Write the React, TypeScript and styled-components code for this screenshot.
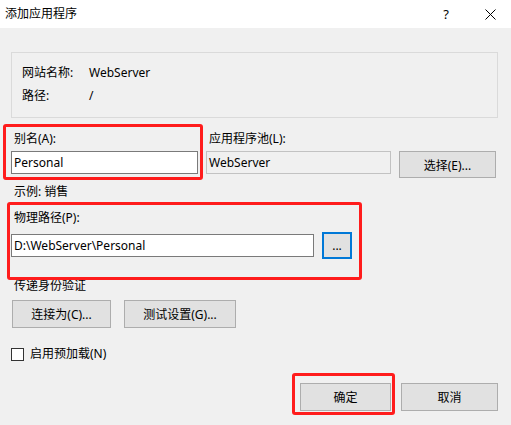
import React from "react";
import styled, { createGlobalStyle } from "styled-components";

const GlobalStyle = createGlobalStyle`
  html, body {
    margin: 0;
    padding: 0;
    background: #f0f0f0;
  }
  body {
    font-family: "Noto Sans", "Noto Sans CJK SC", sans-serif;
    font-size: 12px;
    color: #000;
  }
`;

const Dialog = styled.div`
  width: 511px;
  height: 425px;
  background: #f0f0f0;
  overflow: hidden;
`;

const TitleBar = styled.div`
  height: 28px;
  background: #fff;
  display: flex;
  align-items: center;
  padding-left: 5px;
`;

const Title = styled.span`
  flex: 1;
  font-size: 12px;
  line-height: 16px;
`;

const TitleButton = styled.span<{ $w: number }>`
  width: ${(p) => p.$w}px;
  height: 28px;
  display: flex;
  align-items: center;
  justify-content: center;
  font-size: 13px;
`;

const Body = styled.div`
  padding: 0 13px 0 11px;
`;

const InfoBox = styled.div`
  margin-top: 24px;
  height: 66px;
  box-sizing: border-box;
  border: 1px solid #dadada;
  padding: 12px 10px 0;
  display: flex;
  flex-direction: column;
  gap: 7px;
`;

const InfoRow = styled.div`
  display: flex;
  align-items: center;
  height: 16px;
  line-height: 16px;
`;

const InfoLabel = styled.span`
  width: 67px;
`;

const Label = styled.div<{ $mt?: number }>`
  height: 16px;
  display: flex;
  align-items: center;
  line-height: 16px;
  padding-left: 3px;
  margin-top: ${(p) => p.$mt ?? 0}px;
`;

const Marked = styled.div`
  position: relative;
`;

const Ring = styled.div<{ $t: number; $r: number; $b: number; $l: number }>`
  position: absolute;
  top: ${(p) => p.$t}px;
  right: ${(p) => p.$r}px;
  bottom: ${(p) => p.$b}px;
  left: ${(p) => p.$l}px;
  border: 3px solid #ff1c1c;
  border-radius: 3px;
  pointer-events: none;
`;

const PoolGrid = styled.div`
  margin-top: 13px;
  display: grid;
  grid-template-columns: 187px 185px 97px;
  column-gap: 8px;
  align-items: start;
`;

const Field = styled.div`
  display: flex;
  flex-direction: column;
  gap: 4px;
`;

const TextBox = styled.div<{ $w: number; $readOnly?: boolean }>`
  width: ${(p) => p.$w}px;
  height: 23px;
  box-sizing: border-box;
  border: 1px solid ${(p) => (p.$readOnly ? "#c2c2c2" : "#7a7a7a")};
  background: ${(p) => (p.$readOnly ? "#f0f0f0" : "#fff")};
  padding-left: 2px;
  display: flex;
  align-items: center;
  font-size: 12px;
  white-space: nowrap;
  flex-shrink: 0;
`;

const Button = styled.div<{ $w: number; $focus?: boolean }>`
  width: ${(p) => p.$w}px;
  height: ${(p) => (p.$focus ? 27 : 28)}px;
  box-sizing: border-box;
  border: ${(p) => (p.$focus ? "2px solid #0078d7" : "1px solid #adadad")};
  background: #e1e1e1;
  display: flex;
  align-items: center;
  justify-content: center;
  font-size: 12px;
  flex-shrink: 0;
`;

const SelectButton = styled(Button)`
  height: 27px;
  margin-top: 20px;
`;

const PathBlock = styled(Marked)`
  margin-top: 10px;
  width: 341px;
`;

const PathRow = styled.div`
  margin-top: 6px;
  height: 27px;
  display: flex;
  align-items: center;
  gap: 8px;
`;

const ButtonRow = styled.div<{ $mt: number; $gap: number; $end?: boolean }>`
  margin-top: ${(p) => p.$mt}px;
  display: flex;
  gap: ${(p) => p.$gap}px;
  justify-content: ${(p) => (p.$end ? "flex-end" : "flex-start")};
  padding-left: ${(p) => (p.$end ? 0 : 1)}px;
`;

const CheckRow = styled.div`
  margin-top: 18px;
  height: 16px;
  display: flex;
  align-items: center;
  gap: 6px;
  line-height: 16px;
`;

const CheckBox = styled.span`
  width: 13px;
  height: 13px;
  box-sizing: border-box;
  border: 1px solid #333;
  background: #fff;
`;

export default function App() {
  return (
    <Dialog>
      <GlobalStyle />
      <TitleBar>
        <Title>添加应用程序</Title>
        <TitleButton $w={46}>?</TitleButton>
        <TitleButton $w={42}>
          <svg width="11" height="11" viewBox="0 0 11 11">
            <path d="M0.5 0.5 L10.5 10.5 M10.5 0.5 L0.5 10.5" stroke="#000" strokeWidth="1" />
          </svg>
        </TitleButton>
      </TitleBar>
      <Body>
        <InfoBox>
          <InfoRow>
            <InfoLabel>网站名称:</InfoLabel>
            <span>WebServer</span>
          </InfoRow>
          <InfoRow>
            <InfoLabel>路径:</InfoLabel>
            <span>/</span>
          </InfoRow>
        </InfoBox>

        <PoolGrid>
          <Marked>
            <Field>
              <Label>别名(A):</Label>
              <TextBox $w={187}>Personal</TextBox>
            </Field>
            <Ring $t={-7} $r={-5} $b={-6} $l={-8} />
          </Marked>
          <Field>
            <Label>应用程序池(L):</Label>
            <TextBox $w={185} $readOnly>
              WebServer
            </TextBox>
          </Field>
          <SelectButton $w={97}>选择(E)...</SelectButton>
        </PoolGrid>

        <Label $mt={6}>示例: 销售</Label>

        <PathBlock>
          <Label>物理路径(P):</Label>
          <PathRow>
            <TextBox $w={303}>D:\WebServer\Personal</TextBox>
            <Button $w={30} $focus>
              ...
            </Button>
          </PathRow>
          <Ring $t={-8} $r={-10} $b={-21} $l={-4} />
        </PathBlock>

        <Label $mt={19}>传递身份验证</Label>
        <ButtonRow $mt={6} $gap={13}>
          <Button $w={99}>连接为(C)...</Button>
          <Button $w={112}>测试设置(G)...</Button>
        </ButtonRow>

        <CheckRow>
          <CheckBox />
          <span>启用预加载(N)</span>
        </CheckRow>

        <ButtonRow $mt={21} $gap={10} $end>
          <Marked>
            <Button $w={91}>确定</Button>
            <Ring $t={-10} $r={-4} $b={-4} $l={-8} />
          </Marked>
          <Button $w={97}>取消</Button>
        </ButtonRow>
      </Body>
    </Dialog>
  );
}
